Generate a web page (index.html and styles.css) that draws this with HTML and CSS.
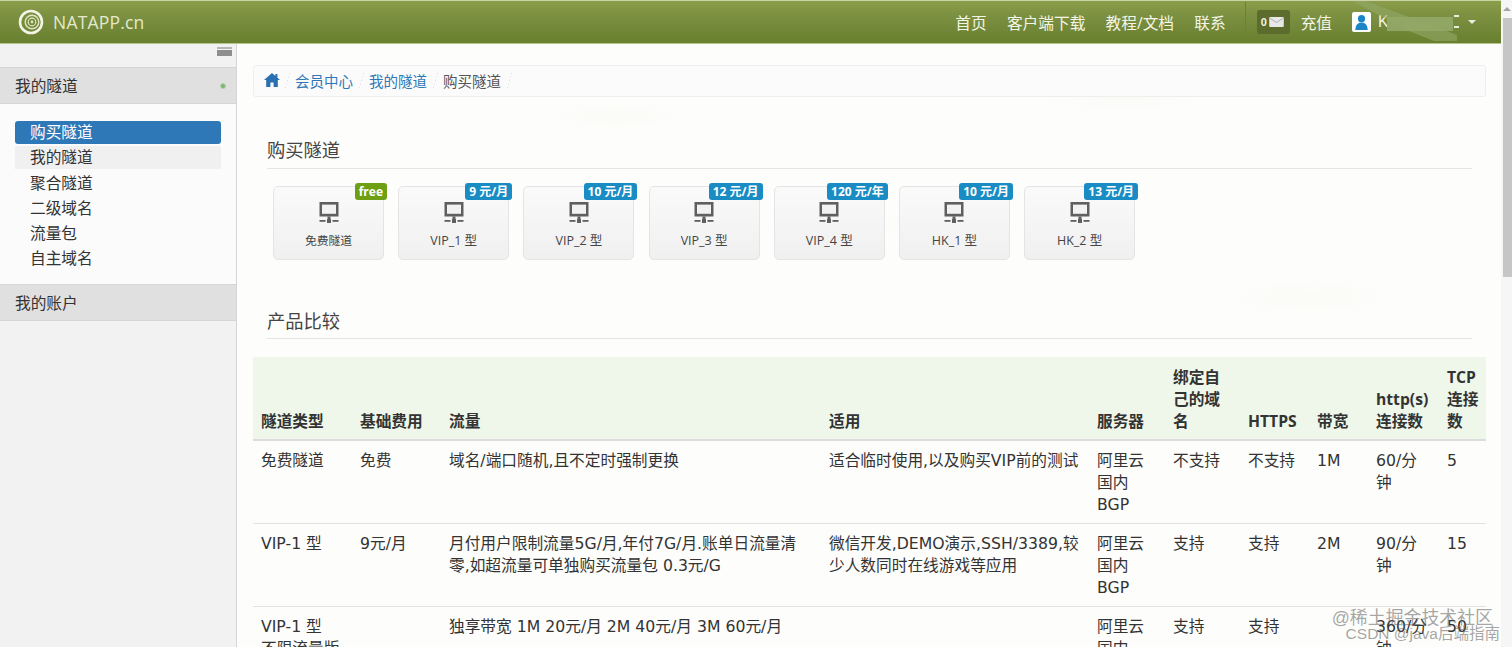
FILE: index.html
```html
<!DOCTYPE html>
<html lang="zh-CN">
<head>
<meta charset="utf-8">
<title>NATAPP.cn</title>
<link rel="stylesheet" href="styles.css">
</head>
<body>
<div class="page">
  <div class="app">
    <header class="navbar">
      <a class="brand">
        <svg class="logo" viewBox="0 0 26 26"><circle cx="13" cy="13" r="11" fill="none" stroke="#f2f4e6" stroke-width="2.6"/><circle cx="14" cy="13" r="6.8" fill="none" stroke="#dfe5c4" stroke-width="1.4"/><circle cx="14" cy="13" r="3.8" fill="none" stroke="#dfe5c4" stroke-width="1.2"/><circle cx="14" cy="13" r="1.4" fill="#dfe5c4"/></svg>
        <span class="brand-text">NATAPP.cn</span>
      </a>
      <nav class="nav-links">
        <a>首页</a><a>客户端下载</a><a>教程/文档</a><a>联系</a>
      </nav>
      <div class="nav-user">
        <span class="msg"><b>0</b><svg class="env" viewBox="0 0 16 11"><rect width="16" height="11" rx="1" fill="#e8e8e8"/><path d="M1 1.500 8 6l7-4.500" fill="none" stroke="#a9a9a9" stroke-width="1"/></svg></span>
        <a class="recharge">充值</a>
        <span class="avatar"><svg viewBox="0 0 18 20"><circle cx="9" cy="6" r="3.800" fill="#1a86c8"/><path d="M2.500 18c0-5 2.500-8 6.500-8s6.500 3 6.500 8z" fill="#1a86c8"/></svg></span>
        <span class="uname">K</span>
        <span class="caret"></span>
      </div>
      <svg class="smear" viewBox="0 0 112 42"><path d="M3 0h14l91 34v6H85L60 30z" fill="#93a968" opacity=".6"/><path d="M38 16h66v14H38z" fill="#93a968" opacity=".9"/><path d="M105 14h5v2h-5zM105 25h5v2h-5z" fill="#e8eddc"/></svg>
    </header>
    <div class="body">
      <aside class="sidebar">
        <div class="toggle"><span class="toggle-icon"></span></div>
        <div class="side-head">我的隧道<i class="dot"></i></div>
        <ul class="side-menu">
          <li class="active">购买隧道</li>
          <li class="hover">我的隧道</li>
          <li>聚合隧道</li>
          <li>二级域名</li>
          <li>流量包</li>
          <li>自主域名</li>
        </ul>
        <div class="side-head">我的账户</div>
      </aside>
      <main class="main">
        <div class="crumbs">
          <svg class="home" viewBox="0 0 16 14"><path d="M8 0 0 7h2.200v7h4.200V9.400h3.200V14h4.200V7H16l-2.600-2.300V1h-2v2z" fill="#2a6fb0"/></svg>
          <span class="sep"></span><a>会员中心</a><span class="sep"></span><a>我的隧道</a><span class="sep"></span><span class="cur">购买隧道</span><span class="sep"></span>
        </div>
        <h3 class="sec sec-buy">购买隧道</h3>
        <div class="cards">
          <div class="card"><span class="tag tag-free">free</span><svg class="net" viewBox="0 0 20 21"><use href="#net"/></svg><span class="card-label small">免费隧道</span></div>
          <div class="card"><span class="tag">9 元/月</span><svg class="net" viewBox="0 0 20 21"><use href="#net"/></svg><span class="card-label">VIP_1 型</span></div>
          <div class="card"><span class="tag">10 元/月</span><svg class="net" viewBox="0 0 20 21"><use href="#net"/></svg><span class="card-label">VIP_2 型</span></div>
          <div class="card"><span class="tag">12 元/月</span><svg class="net" viewBox="0 0 20 21"><use href="#net"/></svg><span class="card-label">VIP_3 型</span></div>
          <div class="card"><span class="tag">120 元/年</span><svg class="net" viewBox="0 0 20 21"><use href="#net"/></svg><span class="card-label">VIP_4 型</span></div>
          <div class="card"><span class="tag">10 元/月</span><svg class="net" viewBox="0 0 20 21"><use href="#net"/></svg><span class="card-label">HK_1 型</span></div>
          <div class="card"><span class="tag">13 元/月</span><svg class="net" viewBox="0 0 20 21"><use href="#net"/></svg><span class="card-label">HK_2 型</span></div>
        </div>
        <h3 class="sec sec-cmp">产品比较</h3>
        <table class="cmp">
          <colgroup><col class="c1"><col class="c2"><col class="c3"><col class="c4"><col class="c5"><col class="c6"><col class="c7"><col class="c8"><col class="c9"><col class="c10"></colgroup>
          <thead><tr><th>隧道类型</th><th>基础费用</th><th>流量</th><th>适用</th><th>服务器</th><th>绑定自己的域名</th><th>HTTPS</th><th>带宽</th><th>http(s)连接数</th><th>TCP连接数</th></tr></thead>
          <tbody>
            <tr><td>免费隧道</td><td>免费</td><td>域名/端口随机,且不定时强制更换</td><td>适合临时使用,以及购买VIP前的测试</td><td>阿里云国内BGP</td><td>不支持</td><td>不支持</td><td>1M</td><td>60/分钟</td><td>5</td></tr>
            <tr><td>VIP-1 型</td><td>9元/月</td><td>月付用户限制流量5G/月,年付7G/月.账单日流量清零,如超流量可单独购买流量包 0.3元/G</td><td>微信开发,DEMO演示,SSH/3389,较少人数同时在线游戏等应用</td><td>阿里云国内BGP</td><td>支持</td><td>支持</td><td>2M</td><td>90/分钟</td><td>15</td></tr>
            <tr><td>VIP-1 型<br>不限流量版</td><td></td><td>独享带宽 1M 20元/月 2M 40元/月 3M 60元/月</td><td></td><td>阿里云国内BGP</td><td>支持</td><td>支持</td><td></td><td>360/分钟</td><td>50</td></tr>
          </tbody>
        </table>
      </main>
    </div>
  </div>
  <div class="scrollbar"><span class="arrow"></span><span class="thumb"></span></div>
  <div class="mark"><span class="mark-a">@稀土掘金技术社区</span><span class="mark-b">CSDN @java后端指南</span></div>
</div>
<svg class="defs" width="0" height="0"><defs><g id="net"><path d="M0.500 0h19v14.500h-19z" fill="#5f5f5f"/><path d="M3 2.600h14v9.200H3z" fill="#f2f2f2"/><rect x="8.500" y="14.500" width="3" height="2.500" fill="#5f5f5f"/><rect x="8" y="17" width="4" height="4" fill="#5f5f5f"/><rect x="0.500" y="18" width="6" height="1.800" fill="#5f5f5f"/><rect x="13.500" y="18" width="6" height="1.800" fill="#5f5f5f"/></g></defs></svg>
</body>
</html>
```

FILE: styles.css
```css
* { box-sizing: border-box; }
html, body { margin: 0; height: 100%; overflow: hidden; }
body { font-family: "Liberation Sans", "Noto Sans CJK SC", sans-serif; font-size: 15.7px; color: #333; background: #fdfdfc; }
a { color: inherit; text-decoration: none; }
ul { list-style: none; margin: 0; padding: 0; }
.defs { position: absolute; }

.page { position: relative; display: flex; height: 647px; width: 1512px; overflow: hidden; }
.app { width: 1501px; height: 647px; display: flex; flex-direction: column; }

.navbar { position: relative; height: 44px; flex: none; display: flex; align-items: center; padding-right: 25px; color: #f3f5e6; background: linear-gradient(#8a9e4a 0, #7d9142 30%, #68802f 100%); border-top: 1px solid #c9d3a6; border-bottom: 1px solid #b6c58c; }
.brand { display: flex; align-items: center; margin-left: 18px; }
.logo { width: 26px; height: 26px; }
.brand-text { margin-left: 9px; font-size: 17.500px; font-family: "Open Sans", "Liberation Sans", sans-serif; letter-spacing: .2px; color: #e4e9cc; }
.nav-links { margin-left: auto; display: flex; gap: 20.200px; font-family: "Open Sans", "Noto Sans CJK SC", sans-serif; }
.nav-user { display: flex; align-items: center; height: 41px; margin-left: 19px; padding-left: 11px; border-left: 1px solid #6c8232; }
.msg { display: flex; align-items: center; gap: 2px; width: 33px; height: 24px; padding-left: 4px; background: #5b6c2c; border-radius: 3px; font-size: 11px; }
.env { width: 15px; height: 10px; }
.recharge { margin-left: 11px; }
.avatar { width: 19px; height: 20px; margin-left: 20px; background: #fff; border-radius: 2px; display: flex; align-items: flex-end; }
.avatar svg { width: 19px; height: 19px; }
.uname { margin-left: 7px; width: 84px; }
.caret { width: 0; height: 0; margin-left: 6px; border: 4px solid transparent; border-top-color: #e8eddc; border-bottom: 0; }
.smear { position: absolute; top: 0; right: 40px; width: 112px; height: 42px; }

.body { flex: 1; min-height: 0; display: flex; }
.sidebar { width: 237px; flex: none; background: #f2f2f2; border-right: 1px solid #d6d6d6; }
.toggle { height: 23px; display: flex; justify-content: flex-end; padding: 3px 4px 0 0; }
.toggle-icon { width: 15px; height: 9px; background: linear-gradient(#b5b5b5 0 2px, #f2f2f2 2px 3px, #8e8e8e 3px); }
.side-head { height: 37px; display: flex; align-items: center; justify-content: space-between; padding: 0 10px 0 15px; background: #e0e0e0; border-top: 1px solid #d5d5d5; border-bottom: 1px solid #d5d5d5; }
.dot { width: 6px; height: 6px; border-radius: 50%; background: #7cb56c; border: 1px solid #b8cfae; }
.side-menu { background: #fbfbfb; height: 180px; padding: 17px 15px 0; display: flex; flex-direction: column; gap: 2.300px; }
.side-menu li { height: 23px; line-height: 23px; padding-left: 15px; border-radius: 3px; }
.side-menu .active { background: #2f78b8; color: #fff; }
.side-menu .hover { background: #f0f0f0; border-radius: 0; }

.main { flex: 1; min-width: 0; padding: 21px 15px 0 16px; background-color: #fdfdfb; background-image: radial-gradient(ellipse 60px 14px at 30% 12%, rgba(225,222,210,.09), transparent), radial-gradient(ellipse 90px 20px at 70% 8%, rgba(225,222,210,.1), transparent), radial-gradient(ellipse 70px 16px at 55% 30%, rgba(225,222,210,.08), transparent), radial-gradient(ellipse 80px 18px at 85% 42%, rgba(225,222,210,.09), transparent); }
.crumbs { height: 32px; display: flex; align-items: center; padding: 0 0 2px 10px; font-size: 14.500px; color: #2f78b8; background: #fbfbfb; border: 1px solid #efefef; border-radius: 3px; }
.home { width: 16px; height: 14px; flex: none; margin-right: -1px; }
.sep { width: 5px; height: 17px; margin: 0 5.500px; flex: none; background: linear-gradient(to bottom right, transparent 46%, #e2e2e2 50%, transparent 54%); }
.cur { color: #555; }
.sec { margin: 0 14px; font-weight: 400; font-size: 18.250px; line-height: 26px; color: #444; border-bottom: 1px solid #e4e4e4; }
.sec-buy { padding-bottom: 4px; margin-top: 41px; }
.sec-cmp { padding-bottom: 3px; margin-top: 49px; }
.cards { display: flex; gap: 14.200px; padding: 17px 0 0 20px; }
.card { position: relative; width: 111px; height: 74px; display: flex; flex-direction: column; align-items: center; padding-top: 15px; background: linear-gradient(#fafafa, #f0f0f0); border: 1px solid #e4e4e4; border-radius: 5px; font-family: "Open Sans", "Noto Sans CJK SC", sans-serif; }
.tag { position: absolute; top: -4px; right: -4px; height: 17px; line-height: 17px; padding: 0 4px; font-size: 12px; font-weight: 700; color: #fff; background: #1a8cc4; border-radius: 3px; white-space: nowrap; }
.tag-free { background: #6f9f12; }
.net { width: 20px; height: 21px; }
.card-label { margin-top: 7px; font-size: 12.500px; color: #444; }
.card-label.small { font-size: 11.800px; margin-top: 8px; }

.cmp { width: 1233px; margin-top: 18px; border-collapse: collapse; table-layout: fixed; line-height: 22px; }
.c1 { width: 99px; } .c2 { width: 89px; } .c3 { width: 380px; } .c4 { width: 268px; } .c5 { width: 76px; }
.c6 { width: 75px; } .c7 { width: 69px; } .c8 { width: 59px; } .c9 { width: 71px; } .c10 { width: 47px; }
.cmp th { padding: 9px 8px 7px; text-align: left; vertical-align: bottom; font-family: "Open Sans", "Noto Sans CJK SC", sans-serif; font-weight: 700; background: #eef7ea; border-bottom: 2px solid #ddd; }
.cmp th:last-child { padding-right: 6px; }
.cmp td { padding: 9px 8px 7px; vertical-align: top; font-family: "DejaVu Sans", "Noto Sans CJK SC", sans-serif; border-bottom: 1px solid #e2e2e2; color: #333; }

.scrollbar { width: 11px; flex: none; background: #f6f6f6; position: relative; display: flex; flex-direction: column; align-items: center; }
.arrow { margin-top: 7px; width: 0; height: 0; border: 4px solid transparent; border-top: 0; border-bottom-color: #a3a3a3; }
.thumb { position: absolute; top: 18px; height: 259px; left: 2px; right: 0; background: #c6c6c6; }

.mark { position: absolute; right: 11px; top: 610px; display: flex; flex-direction: column; align-items: flex-end; color: rgba(90,90,90,.55); pointer-events: none; white-space: nowrap; }
.mark-a { font-size: 17.900px; line-height: 17px; margin-right: 8px; }
.mark-b { font-size: 15.500px; line-height: 15px; margin-top: -1px; margin-right: 1px; }
```
